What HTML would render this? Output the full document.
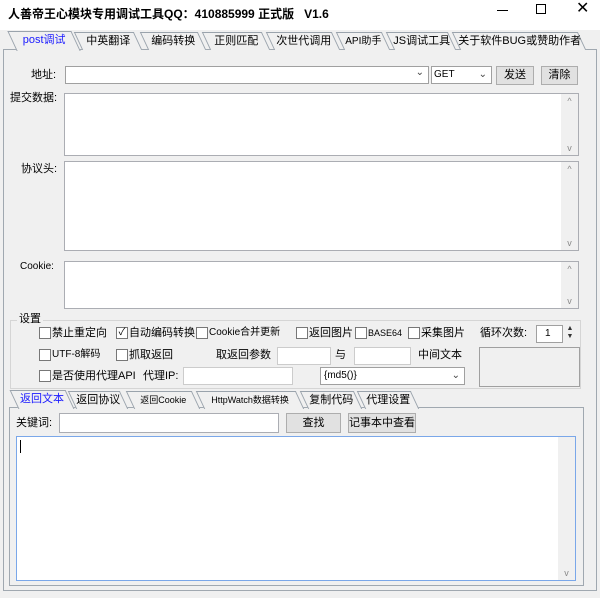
<!DOCTYPE html>
<html><head><meta charset="utf-8"><style>
*{margin:0;padding:0;box-sizing:border-box}
body{width:600px;height:598px;background:#f0f0f0;position:relative;overflow:hidden;font-family:"Liberation Sans","Noto Sans CJK SC",sans-serif;font-size:11px;color:#000}
.a{position:absolute;white-space:nowrap}
.t{line-height:14px}
.box{position:absolute;background:#fff;border:1px solid #a0a0a0;white-space:nowrap}
.ta{position:absolute;background:#fff;border:1px solid #abadb3}
.sb{position:absolute;right:0;top:0;bottom:0;width:17px;background:#f0f0f0;color:#888;font-size:9px;text-align:center}
.btn{position:absolute;background:#e1e1e1;border:1px solid #adadad;text-align:center;line-height:17px;white-space:nowrap;font-size:11px}
.cb{position:absolute;width:12px;height:12px;border:1px solid #777;background:#fff}
.tab{position:absolute;height:18px;border:1px solid #9aa3ac;border-bottom:none;background:#f0f0f0;text-align:center;line-height:17px;transform:skewX(25deg);white-space:nowrap;overflow:visible}
.tab span{display:inline-block;transform:skewX(-25deg);white-space:nowrap;font-size:11px}
.dd{position:absolute;right:4px;top:0;font-size:10px;color:#444}
</style></head><body>
<div class="a" style="left:0;top:0;width:600px;height:30px;background:#fff"></div>
<div class="a" style="left:8px;top:5px;font-size:12px;font-weight:bold;line-height:18px">人善帝王心模块专用调试工具QQ：410885999 正式版&nbsp;&nbsp; V1.6</div>
<div class="a" style="left:497px;top:10px;width:11px;height:1px;background:#000"></div>
<div class="a" style="left:536px;top:4px;width:10px;height:10px;border:1px solid #000"></div>
<div class="a" style="left:576px;top:0px;font-size:16px;line-height:18px">✕</div>

<div class="a" style="left:3px;top:49px;width:594px;height:542px;border:1px solid #a0a8b0;background:#f0f0f0"></div>
<div class="tab" style="left:78px;top:32px;width:60px"><span>中英翻译</span></div>
<div class="tab" style="left:144px;top:32px;width:58px"><span>编码转换</span></div>
<div class="tab" style="left:206px;top:32px;width:60px"><span>正则匹配</span></div>
<div class="tab" style="left:270px;top:32px;width:66px"><span>次世代调用</span></div>
<div class="tab" style="left:340px;top:32px;width:46px"><span style="font-size:10px">API助手</span></div>
<div class="tab" style="left:390px;top:32px;width:62px"><span>JS调试工具</span></div>
<div class="tab" style="left:456px;top:32px;width:126px"><span>关于软件BUG或赞助作者</span></div>
<div class="tab" style="left:12px;top:31px;width:64px;height:20px;"><span style="color:#1a1aff;font-size:11px">post调试</span></div>

<div class="a t" style="left:31px;top:68px">地址:</div>
<div class="box" style="left:65px;top:66px;width:364px;height:18px"><span class="dd">⌄</span></div>
<div class="box" style="left:431px;top:66px;width:61px;height:18px;font-size:10px;padding-left:2px;line-height:16px">GET<span class="dd">⌄</span></div>
<div class="btn" style="left:496px;top:66px;width:38px;height:19px">发送</div>
<div class="btn" style="left:541px;top:66px;width:37px;height:19px">清除</div>

<div class="a t" style="left:10px;top:91px">提交数据:</div>
<div class="ta" style="left:64px;top:93px;width:515px;height:63px"><div class="sb"><div style="margin-top:2px">^</div><div style="position:absolute;bottom:2px;width:17px">v</div></div></div>
<div class="a t" style="left:21px;top:162px">协议头:</div>
<div class="ta" style="left:64px;top:161px;width:515px;height:90px"><div class="sb"><div style="margin-top:2px">^</div><div style="position:absolute;bottom:2px;width:17px">v</div></div></div>
<div class="a t" style="left:20px;top:260px;font-size:10px">Cookie:</div>
<div class="ta" style="left:64px;top:261px;width:515px;height:48px"><div class="sb"><div style="margin-top:2px">^</div><div style="position:absolute;bottom:2px;width:17px">v</div></div></div>

<div class="a" style="left:10px;top:320px;width:571px;height:69px;border:1px solid #d5d5d5"></div>
<div class="a t" style="left:17px;top:312px;background:#f0f0f0;padding:0 2px">设置</div>
<div class="cb" style="left:39px;top:327px"></div><div class="a t" style="left:52px;top:326px">禁止重定向</div>
<div class="cb" style="left:116px;top:327px;font-size:10px;line-height:10px;text-align:center">✓</div><div class="a t" style="left:129px;top:326px">自动编码转换</div>
<div class="cb" style="left:196px;top:327px"></div><div class="a t" style="left:209px;top:326px;font-size:10px">Cookie合并更新</div>
<div class="cb" style="left:296px;top:327px"></div><div class="a t" style="left:309px;top:326px">返回图片</div>
<div class="cb" style="left:355px;top:327px"></div><div class="a t" style="left:368px;top:326px;font-size:9px">BASE64</div>
<div class="cb" style="left:408px;top:327px"></div><div class="a t" style="left:421px;top:326px">采集图片</div>
<div class="a t" style="left:480px;top:326px">循环次数:</div>
<div class="box" style="left:536px;top:325px;width:27px;height:18px;font-size:10px;padding-left:8px;line-height:16px">1</div>
<div class="a" style="left:564px;top:325px;width:12px;height:18px;font-size:7px;line-height:8px;text-align:center;color:#333">▲<br>▼</div>

<div class="cb" style="left:39px;top:349px"></div><div class="a t" style="left:52px;top:348px;font-size:10px">UTF-8解码</div>
<div class="cb" style="left:116px;top:349px"></div><div class="a t" style="left:129px;top:348px">抓取返回</div>
<div class="a t" style="left:216px;top:348px">取返回参数</div>
<div class="box" style="left:277px;top:347px;width:54px;height:18px;border-color:#ccc"></div>
<div class="a t" style="left:335px;top:348px">与</div>
<div class="box" style="left:354px;top:347px;width:57px;height:18px;border-color:#ccc"></div>
<div class="a t" style="left:418px;top:348px">中间文本</div>
<div class="a" style="left:479px;top:347px;width:101px;height:40px;border:1px solid #a0a0a0"></div>

<div class="cb" style="left:39px;top:370px"></div><div class="a t" style="left:52px;top:369px">是否使用代理API</div>
<div class="a t" style="left:143px;top:369px">代理IP:</div>
<div class="box" style="left:183px;top:367px;width:110px;height:18px;border-color:#ccc"></div>
<div class="box" style="left:320px;top:367px;width:145px;height:18px;font-size:10px;padding-left:3px;line-height:16px">{md5()}<span class="dd">⌄</span></div>

<div class="a" style="left:9px;top:407px;width:575px;height:179px;border:1px solid #a0a8b0"></div>
<div class="tab" style="left:72px;top:391px;width:52px"><span>返回协议</span></div>
<div class="tab" style="left:130px;top:391px;width:66px"><span style="font-size:9px">返回Cookie</span></div>
<div class="tab" style="left:200px;top:391px;width:100px"><span style="font-size:9px">HttpWatch数据转换</span></div>
<div class="tab" style="left:304px;top:391px;width:54px"><span>复制代码</span></div>
<div class="tab" style="left:361px;top:391px;width:54px"><span>代理设置</span></div>
<div class="tab" style="left:14px;top:390px;width:56px;height:19px"><span style="color:#1a1aff">返回文本</span></div>

<div class="a t" style="left:16px;top:416px">关键词:</div>
<div class="box" style="left:59px;top:413px;width:220px;height:20px;border-color:#abadb3"></div>
<div class="btn" style="left:286px;top:413px;width:55px;height:20px;line-height:18px">查找</div>
<div class="btn" style="left:348px;top:413px;width:68px;height:20px;line-height:18px">记事本中查看</div>
<div class="a" style="left:16px;top:436px;width:560px;height:145px;border:1px solid #7aa7e9;background:#fff"><div style="position:absolute;left:3px;top:3px;width:1px;height:13px;background:#000"></div><div class="sb" style="font-size:9px"><div style="position:absolute;bottom:2px;width:17px">v</div></div></div>
</body></html>
